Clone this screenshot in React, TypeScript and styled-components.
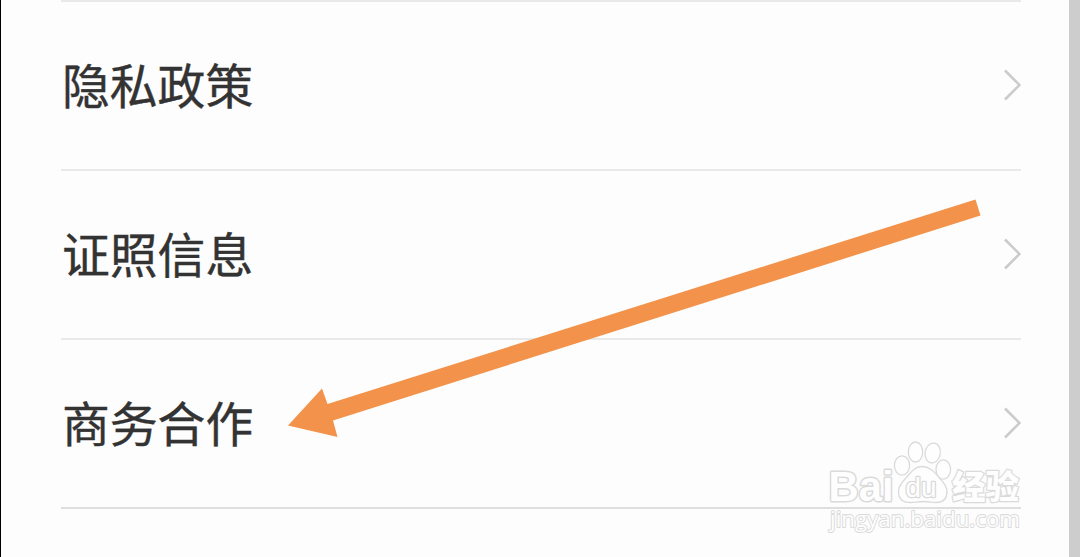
import React from 'react'
import styled, { createGlobalStyle } from 'styled-components';

const GlobalStyle = createGlobalStyle`
    body {
        margin:0;
        background:#fdfdfd;
        overflow:hidden;
    }
`

const Page = styled.div`
    position:relative;
    box-sizing:border-box;
    width:1080px;
    height:557px;
    padding:0 48px 0 60px;
    border-left:1px solid #000;
    border-right:11px solid #cdcdcd;
    background:#fdfdfd;
    overflow:hidden;
    font-family:"Noto Sans CJK SC", sans-serif;
`

const List = styled.ul`
    margin:0;
    padding:0;
    list-style:none;
    border-top:2px solid #e9e9e9;
`

const Item = styled.li<{ $dark?: boolean }>`
    box-sizing:border-box;
    display:flex;
    align-items:center;
    justify-content:space-between;
    height:169px;
    padding-bottom:2px;
    border-bottom:2px solid ${({ $dark }) => ($dark ? '#dedede' : '#e9e9e9')};
`

const Title = styled.span`
    padding:0 0 1px 1px;
    font-size:47.8px;
    line-height:70px;
    color:#333;
    -webkit-text-stroke:0.4px #333;
`

const Chevron = styled.svg`
    width:20px;
    height:34px;
    fill:none;
    stroke:#cbcbcb;
    stroke-width:2.6;
`

const Overlay = styled.svg`
    position:absolute;
    top:0;
    left:-1px;
    width:1080px;
    height:557px;
    pointer-events:none;
`

const Mark = styled.text<{ $outline: number }>`
    paint-order:stroke;
    stroke-width:${({ $outline }) => $outline}px;
`

const items = ['隐私政策', '证照信息', '商务合作']

const Watermark = () => (
    <g fill="#fefefe" stroke="#dadada" strokeWidth="1.3" strokeLinejoin="round">
        <Mark $outline={3} x="828.5" y="500.500" fontFamily='"Liberation Sans", Arial, sans-serif' fontWeight="700" fontSize="43" textLength="65" lengthAdjust="spacingAndGlyphs">Bai</Mark>
        <ellipse cx="902" cy="465.5" rx="7.6" ry="9.7" />
        <ellipse cx="915.5" cy="452" rx="7.2" ry="10" />
        <ellipse cx="932.7" cy="453" rx="7.6" ry="10" transform="rotate(10 932.7 453)" />
        <ellipse cx="943.3" cy="469.5" rx="7.3" ry="9.7" />
        <path d="M922 466.500c-8 0-12 7-16 11.500c-4 4-7.500 8-7.500 13.500c0 8 5.500 11 12 11c5 0 7-1 13-1s8 1 12.500 1c7 0 11-4 11-11c0-6-4-9.500-7.500-13.500c-4-4.500-8.500-11.500-17.500-11.500z" />
        <Mark $outline={2.6} x="905.5" y="497" fontFamily='"Liberation Sans", Arial, sans-serif' fontSize="27" textLength="31" lengthAdjust="spacingAndGlyphs">du</Mark>
        <Mark $outline={2.4} x="952" y="498.500" fontFamily='"Noto Sans CJK SC", sans-serif' fontWeight="900" fontSize="33" textLength="67" lengthAdjust="spacingAndGlyphs">经验</Mark>
        <Mark $outline={1.9} x="830" y="527" fontFamily='"Open Sans", "Noto Sans", sans-serif' fontWeight="400" fontSize="22" textLength="190" lengthAdjust="spacingAndGlyphs">jingyan.baidu.com</Mark>
    </g>
)

const App = () => {
  return (
      <>
          <GlobalStyle />
          <Page>
              <List>
                  {items.map((title, i) => (
                      <Item key={title} $dark={i === items.length - 1}>
                          <Title>{title}</Title>
                          <Chevron viewBox="0 0 20 34">
                              <path d="M4 2.500L18.500 17L4 31.500" />
                          </Chevron>
                      </Item>
                  ))}
              </List>
              <Overlay viewBox="0 0 1080 557">
                  <path fill="#f3924a" d="M288 425.500L322 388.500L327.500 404L975.500 199.500L980.500 215.500L333 420.500L337.500 437z" />
                  <Watermark />
              </Overlay>
          </Page>
      </>
  )
}

export default App
